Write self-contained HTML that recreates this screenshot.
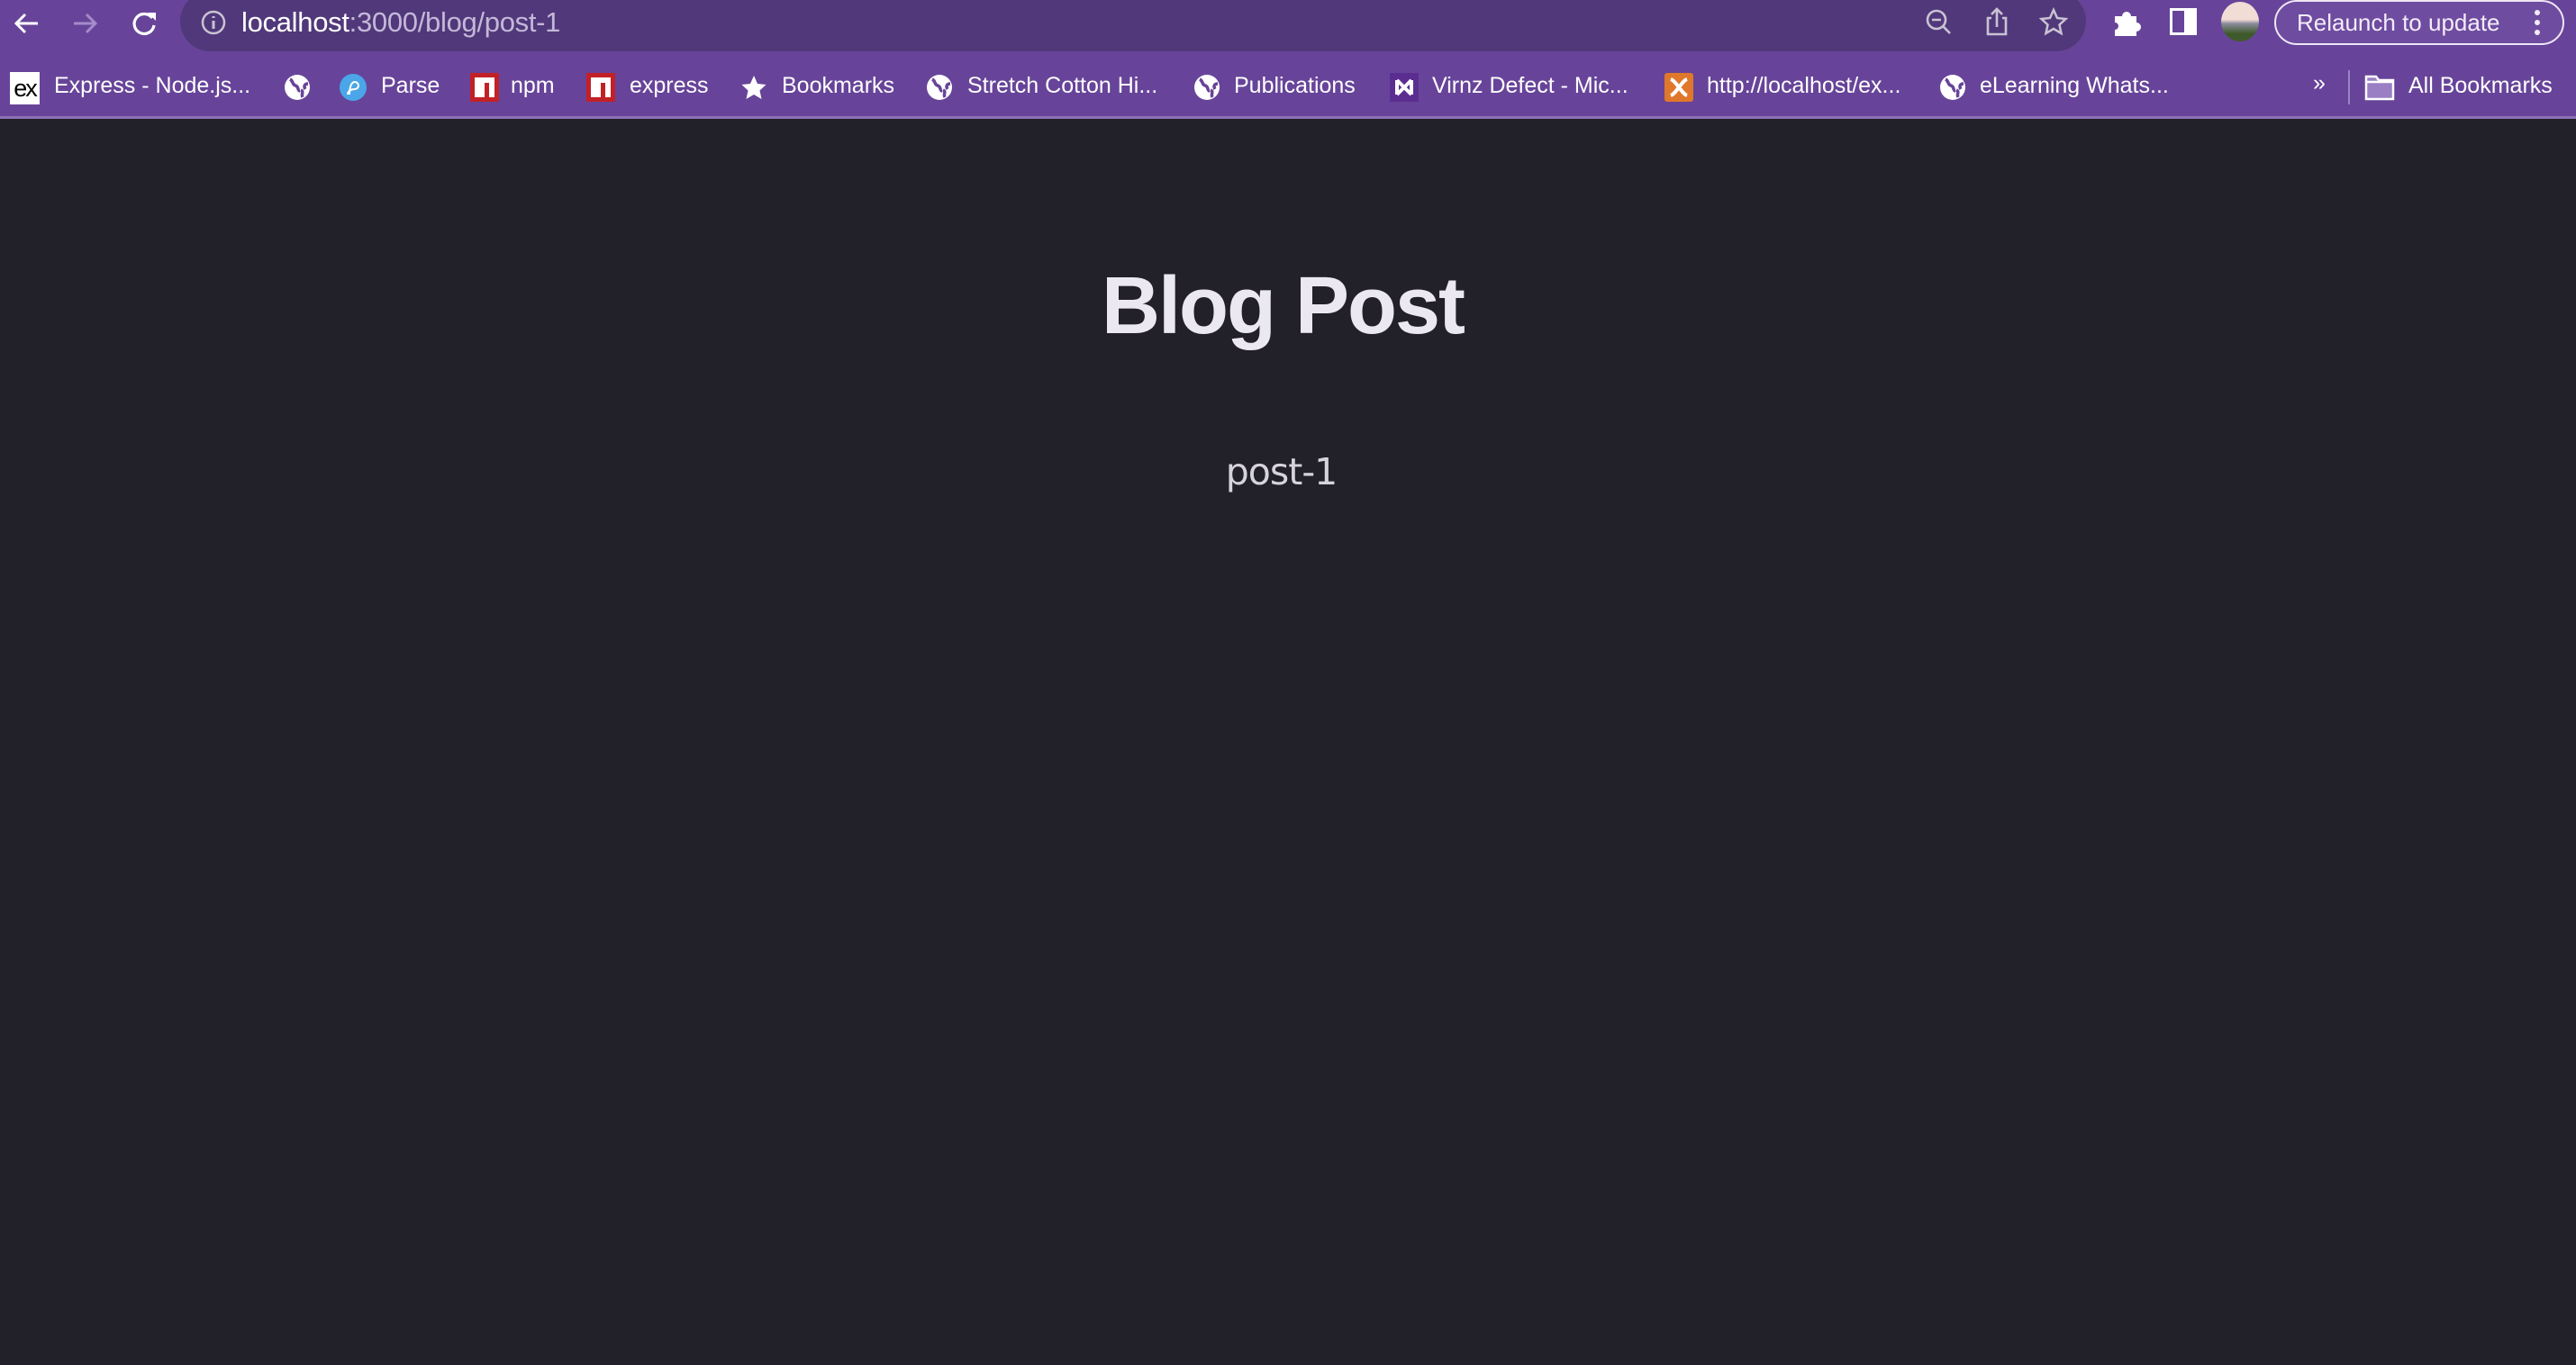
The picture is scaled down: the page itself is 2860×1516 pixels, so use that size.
<!DOCTYPE html>
<html><head><meta charset="utf-8"><style>
*{margin:0;padding:0;box-sizing:border-box}
html,body{width:2860px;height:1516px;overflow:hidden;background:#222029;font-family:"Liberation Sans",sans-serif}
.top{position:absolute;left:0;top:0;width:2860px;height:130px;background:#674499}
.line{position:absolute;left:0;top:129px;width:2860px;height:3px;background:#8e70b8}
.omni{position:absolute;left:200px;top:-10px;width:2116px;height:67px;background:#51387a;border-radius:34px}
.t{position:absolute;color:#fff;font-size:25px;white-space:nowrap;line-height:30px}
.bm{top:80px}
svg{position:absolute}
.ic{position:absolute;top:81px;width:32px;height:32px}
</style></head><body>
<div class="top"></div>
<div class="line"></div>
<div class="omni"></div>
<svg style="left:12px;top:8px" width="36" height="36" viewBox="0 0 36 36"><path d="M30 18H6M16 8L6 18l10 10" stroke="#fff" stroke-width="3" fill="none"/></svg>
<svg style="left:76px;top:8px" width="36" height="36" viewBox="0 0 36 36"><path d="M6 18h24M20 8l10 10-10 10" stroke="#a58bc9" stroke-width="3" fill="none"/></svg>
<svg style="left:142px;top:8px" width="36" height="36" viewBox="0 0 36 36"><path d="M27 12A11 11 0 1 0 29 20" stroke="#fff" stroke-width="3.2" fill="none"/><path d="M22 6h9v9z" fill="#fff"/></svg>
<svg style="left:222px;top:10px" width="30" height="30" viewBox="0 0 30 30"><circle cx="15" cy="15" r="12" stroke="#c9c3d3" stroke-width="2.5" fill="none"/><path d="M15 13v9M15 8v2" stroke="#c9c3d3" stroke-width="3"/></svg>
<div class="t" style="left:268px;top:7px;font-size:31px;letter-spacing:-.3px;line-height:36px"><span style="color:#fff">localhost</span><span style="color:#c4b8d8">:3000/blog/post-1</span></div>
<svg style="left:2136px;top:8px" width="34" height="34" viewBox="0 0 34 34"><circle cx="14" cy="14" r="10" stroke="#c9c3d3" stroke-width="2.6" fill="none"/><path d="M9 14h10M21 21l8 8" stroke="#c9c3d3" stroke-width="2.6"/></svg>
<svg style="left:2200px;top:6px" width="34" height="36" viewBox="0 0 34 36"><path d="M11 14H7v18h20V14h-4M17 24V4M11 10l6-6 6 6" stroke="#c9c3d3" stroke-width="2.6" fill="none"/></svg>
<svg style="left:2264px;top:8px" width="32" height="32" viewBox="0 0 32 32"><path d="M16 3l4 9 9.5 1-7 6.5 2 9.5-8.5-5-8.5 5 2-9.5-7-6.5 9.5-1z" stroke="#c9c3d3" stroke-width="2.5" fill="none"/></svg>
<svg style="left:2344px;top:8px" width="34" height="34" viewBox="0 0 34 34"><path d="M4 10h8a5 5 0 0 1 10 0h6v7a5 5 0 0 1 0 10v5H4v-7a4 4 0 0 0 0-8z" fill="#fff"/></svg>
<svg style="left:2409px;top:9px" width="30" height="30" viewBox="0 0 30 30"><rect x="1.5" y="1.5" width="27" height="27" fill="none" stroke="#fff" stroke-width="3"/><rect x="16" y="1" width="13" height="28" fill="#fff"/></svg>
<div style="position:absolute;left:2466px;top:2px;width:42px;height:44px;border-radius:50%;background:linear-gradient(#f2dcd6 0,#f2dcd6 45%,#8c8c9c 55%,#3e5a2a 80%)"></div>
<div style="position:absolute;left:2525px;top:0;width:322px;height:50px;border:2px solid #efe6f5;border-radius:25px;background:#6e4ca0"></div>
<div class="t" style="left:2550px;top:10px;font-size:26px;color:#f3ecf7">Relaunch to update</div>
<svg style="left:2812px;top:10px" width="10" height="30" viewBox="0 0 10 30"><circle cx="5" cy="4" r="3" fill="#f3ecf7"/><circle cx="5" cy="15" r="3" fill="#f3ecf7"/><circle cx="5" cy="26" r="3" fill="#f3ecf7"/></svg>
<div style="position:absolute;left:11px;top:80px;width:33px;height:36px;background:#fff;color:#000;font-size:27px;line-height:36px;text-align:center;letter-spacing:-2px">ex</div>
<div class="t bm" style="left:60px">Express - Node.js...</div>
<svg class="ic" style="left:314px" viewBox="0 0 32 32"><circle cx="16" cy="16" r="14" fill="#fff"/><path d="M8 7c4 2 2 6 6 7s2 6 5 6M22 27c-2-4 2-6-2-8M28 12c-4 0-5 3-3 6" stroke="#674499" stroke-width="3.5" fill="none"/></svg>
<svg class="ic" style="left:376px" viewBox="0 0 32 32"><circle cx="16" cy="16" r="15" fill="#4aa6e8"/><path d="M12 24c0-8 2-14 6-14a4 4 0 0 1 0 8c-4 0-8 2-8 6" stroke="#fff" stroke-width="2" fill="none"/></svg>
<div class="t bm" style="left:423px">Parse</div>
<svg class="ic" style="left:522px" viewBox="0 0 32 32"><rect width="32" height="32" fill="#c12127"/><path d="M5 5h22v22h-6V11h-5v16H5z" fill="#fff"/></svg>
<div class="t bm" style="left:567px">npm</div>
<svg class="ic" style="left:651px" viewBox="0 0 32 32"><rect width="32" height="32" fill="#c12127"/><path d="M5 5h22v22h-6V11h-5v16H5z" fill="#fff"/></svg>
<div class="t bm" style="left:699px">express</div>
<svg class="ic" style="left:821px" viewBox="0 0 32 32"><path d="M16 3l4 9 9.5 1-7 6.5 2 9.5-8.5-5-8.5 5 2-9.5-7-6.5 9.5-1z" fill="#fff"/></svg>
<div class="t bm" style="left:868px">Bookmarks</div>
<svg class="ic" style="left:1027px" viewBox="0 0 32 32"><circle cx="16" cy="16" r="14" fill="#fff"/><path d="M8 7c4 2 2 6 6 7s2 6 5 6M22 27c-2-4 2-6-2-8M28 12c-4 0-5 3-3 6" stroke="#674499" stroke-width="3.5" fill="none"/></svg>
<div class="t bm" style="left:1074px">Stretch Cotton Hi...</div>
<svg class="ic" style="left:1324px" viewBox="0 0 32 32"><circle cx="16" cy="16" r="14" fill="#fff"/><path d="M8 7c4 2 2 6 6 7s2 6 5 6M22 27c-2-4 2-6-2-8M28 12c-4 0-5 3-3 6" stroke="#674499" stroke-width="3.5" fill="none"/></svg>
<div class="t bm" style="left:1370px">Publications</div>
<svg class="ic" style="left:1543px" viewBox="0 0 32 32"><rect width="32" height="32" fill="#5c2d91"/><path d="M8 8l16 16M8 24L24 8M8 8v16M24 8v16" stroke="#fff" stroke-width="4"/></svg>
<div class="t bm" style="left:1590px">Virnz Defect - Mic...</div>
<svg class="ic" style="left:1848px" viewBox="0 0 32 32"><rect width="32" height="32" rx="3" fill="#e0782c"/><path d="M7 7c6 2 12 16 18 18M25 7C19 9 13 23 7 25" stroke="#fff" stroke-width="4" fill="none"/></svg>
<div class="t bm" style="left:1895px">http://localhost/ex...</div>
<svg class="ic" style="left:2152px" viewBox="0 0 32 32"><circle cx="16" cy="16" r="14" fill="#fff"/><path d="M8 7c4 2 2 6 6 7s2 6 5 6M22 27c-2-4 2-6-2-8M28 12c-4 0-5 3-3 6" stroke="#674499" stroke-width="3.5" fill="none"/></svg>
<div class="t bm" style="left:2198px">eLearning Whats...</div>
<div class="t bm" style="left:2568px;top:77px">»</div>
<div style="position:absolute;left:2607px;top:78px;width:2px;height:38px;background:#9b82c2"></div>
<svg class="ic" style="left:2625px;width:34px" viewBox="0 0 34 32"><path d="M2 4h11l3 4h16v21H2z" fill="#9a7fc4" stroke="#fff" stroke-width="2.5"/><path d="M2 10h30" stroke="#fff" stroke-width="2.5"/></svg>
<div class="t bm" style="left:2674px">All Bookmarks</div>
<div style="position:absolute;left:0;top:290px;width:2848px;text-align:center;color:#ebe8f2;font-size:90px;font-weight:bold;letter-spacing:-2px;line-height:100px">Blog Post</div>
<div style="position:absolute;left:0;top:498px;width:2845px;text-align:center;color:#d7d3de;font-size:41px;line-height:52px;font-family:'DejaVu Sans',sans-serif;letter-spacing:-1px">post-1</div>
</body></html>
